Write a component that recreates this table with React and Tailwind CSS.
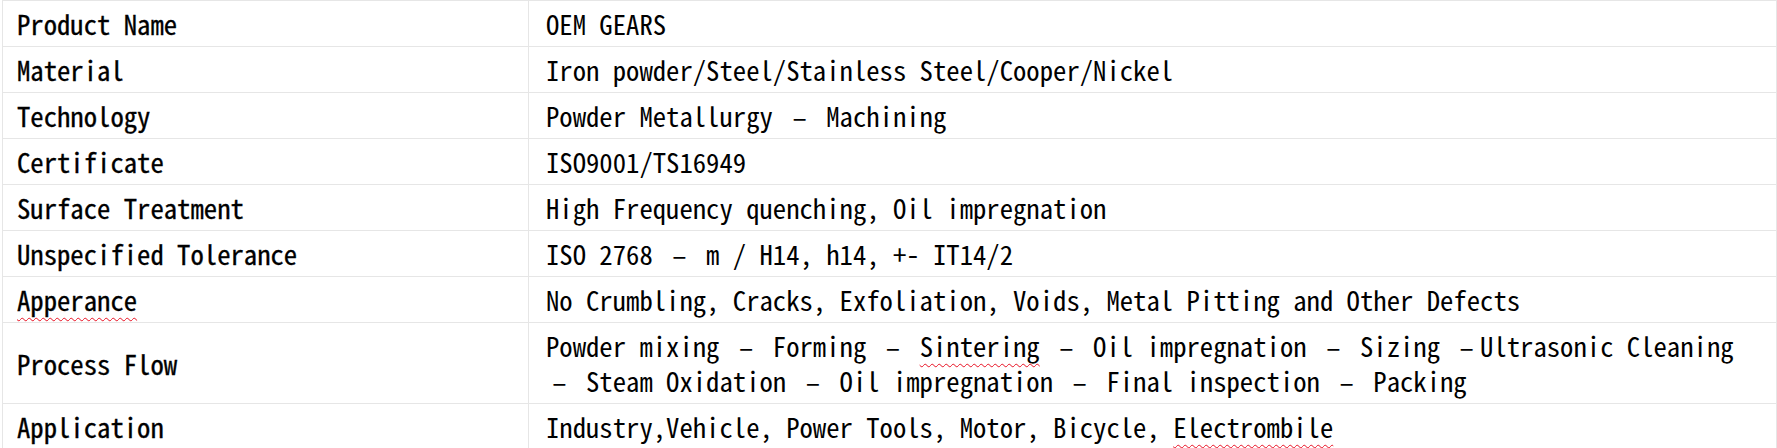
import React from "react";

const D = () => (
  <span className="inline-block w-[26.7px] text-center">–</span>
);

const Wavy = ({ children }) => (
  <span className="underline decoration-wavy decoration-[#e81123] decoration-1 underline-offset-[6px]">
    {children}
  </span>
);

const rows = [
  { k: "Product Name", v: <>OEM GEARS</> },
  { k: "Material", v: <>Iron powder/Steel/Stainless Steel/Cooper/Nickel</> },
  { k: "Technology", v: <>Powder Metallurgy <D /> Machining</> },
  { k: "Certificate", v: <>ISO9001/TS16949</> },
  { k: "Surface Treatment", v: <>High Frequency quenching, Oil impregnation</> },
  { k: "Unspecified Tolerance", v: <>ISO 2768 <D /> m / H14, h14, +- IT14/2</> },
  {
    k: <Wavy>Apperance</Wavy>,
    v: <>No Crumbling, Cracks, Exfoliation, Voids, Metal Pitting and Other Defects</>,
  },
  {
    k: "Process Flow",
    v: (
      <>
        <div>
          Powder mixing <D /> Forming <D /> <Wavy>Sintering</Wavy> <D /> Oil impregnation <D /> Sizing <D />Ultrasonic Cleaning
        </div>
        <div>
          <D /> Steam Oxidation <D /> Oil impregnation <D /> Final inspection <D /> Packing
        </div>
      </>
    ),
  },
  {
    k: "Application",
    v: <>Industry,Vehicle, Power Tools, Motor, Bicycle, <Wavy>Electrombile</Wavy></>,
  },
];

export default function App() {
  return (
    <div className="h-[448px] w-[1777px] overflow-hidden bg-white">
      <div
        className="ml-[2px] w-[1775px] border-l border-r border-t border-[#e6e6e6] text-[26.7px] leading-[35px] text-black"
        style={{ fontFamily: "'Noto Sans Mono CJK SC', 'Noto Sans CJK SC', 'Liberation Mono', monospace" }}
      >
        {rows.map((r, i) => (
          <div key={i} className="flex border-b border-[#e6e6e6]">
            <div className="flex w-[526px] shrink-0 items-center border-r border-[#e6e6e6] py-[5px] pl-[14px] whitespace-pre [-webkit-text-stroke:0.3px_black]">
              {r.k}
            </div>
            <div className="flex-1 py-[5px] pl-[17px] whitespace-pre">
              <div>{r.v}</div>
            </div>
          </div>
        ))}
      </div>
    </div>
  );
}
